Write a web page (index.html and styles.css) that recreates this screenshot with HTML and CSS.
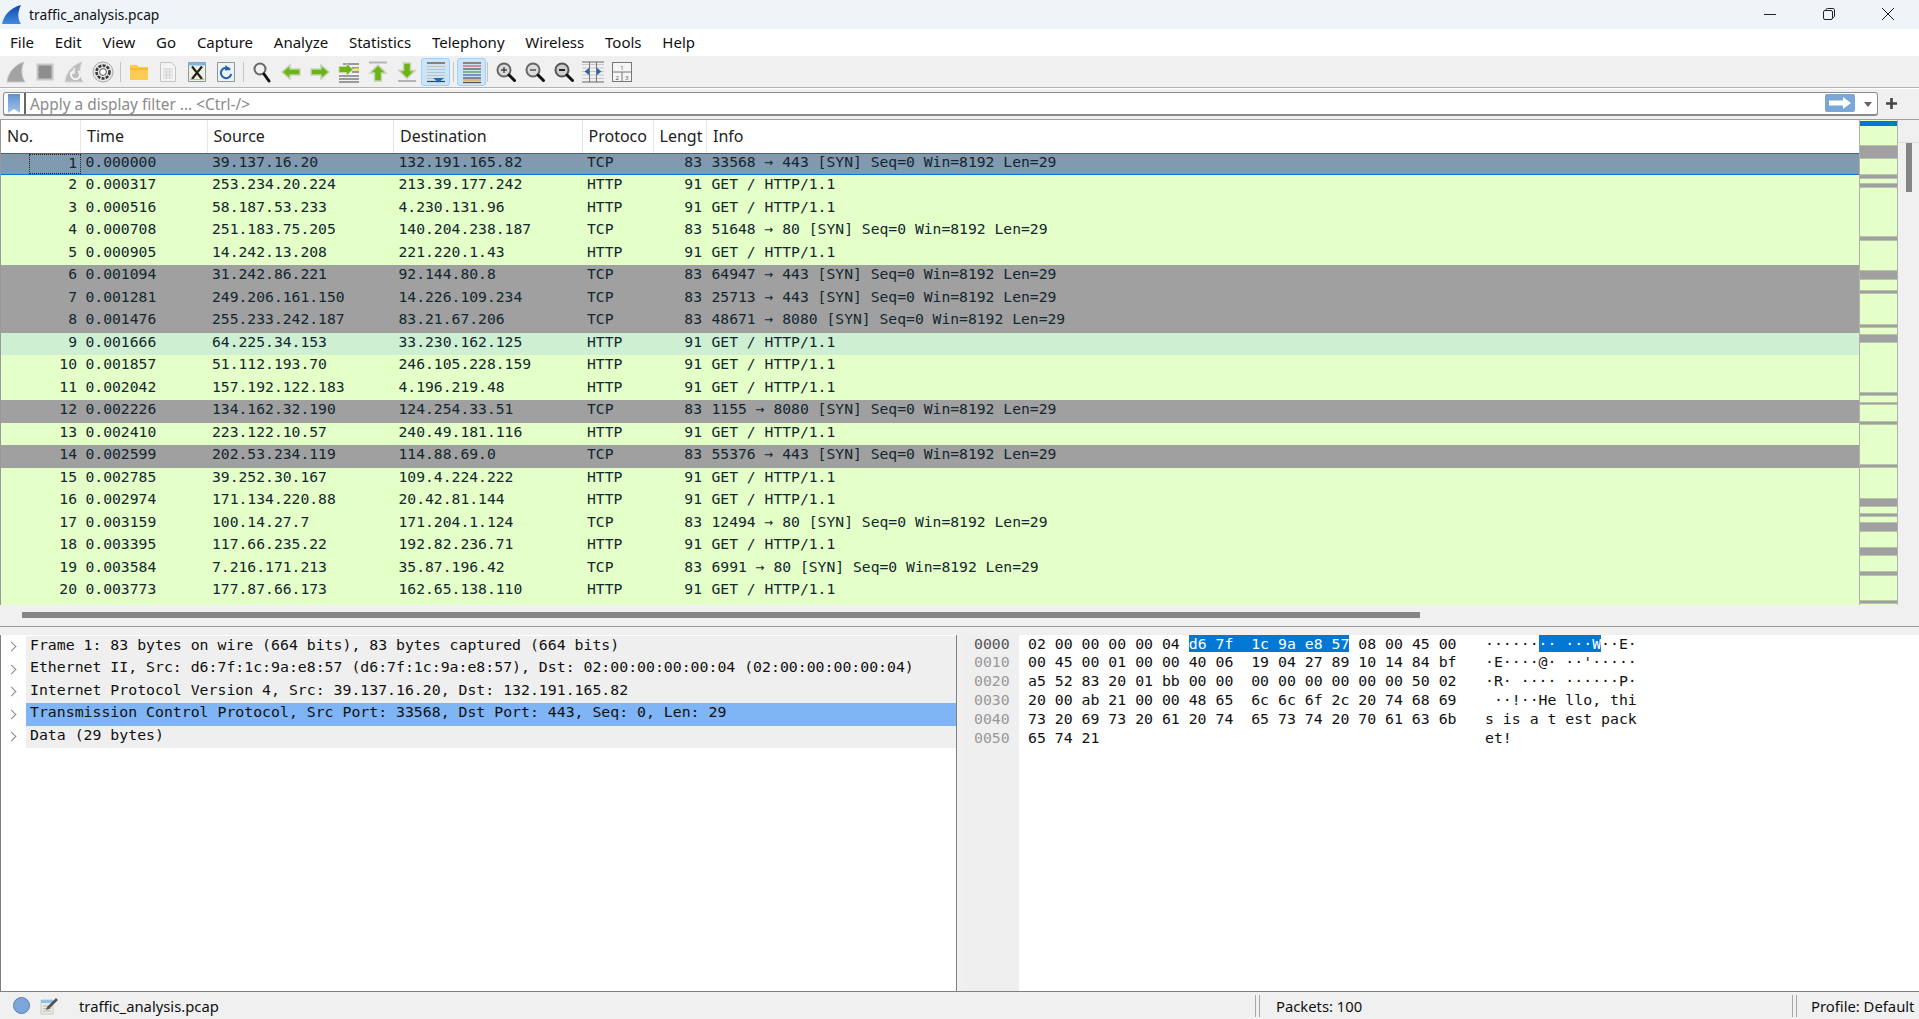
FILE: index.html
```html
<!DOCTYPE html>
<html lang="en">
<head>
    <meta charset="UTF-8">
    <title>traffic_analysis.pcap</title>
    <link rel="stylesheet" href="styles.css">
</head>
<body>
    <div class="titlebar">
        <svg class="app-icon" width="20" height="20" viewBox="0 0 20 20"><defs><linearGradient id="fin" x1="0" y1="0" x2="0" y2="1"><stop offset="0" stop-color="#0f4aa8"/><stop offset="1" stop-color="#3f8be0"/></linearGradient></defs><path d="M0 19C2 10 8 3 19 0C16 6 15 13 19 19Z" fill="url(#fin)"/></svg>
        <span class="title-text">traffic_analysis.pcap</span>
        <div class="win-buttons">
            <svg width="14" height="14" viewBox="0 0 14 14"><path d="M1 7.5H13" stroke="#222" fill="none"/></svg>
            <svg width="14" height="14" viewBox="0 0 14 14"><rect x="1.5" y="3.5" width="9" height="9" rx="1.5" fill="none" stroke="#222"/><path d="M4 3V2.5C4 1.7 4.7 1.5 5.5 1.5H11C12 1.5 12.5 2 12.5 3V9C12.5 10 12 10.5 11 10.5" fill="none" stroke="#222"/></svg>
            <svg width="14" height="14" viewBox="0 0 14 14"><path d="M1 1L13 13M13 1L1 13" stroke="#222" fill="none"/></svg>
        </div>
    </div>

    <div class="menubar">
        <span>File</span><span>Edit</span><span>View</span><span>Go</span><span>Capture</span><span>Analyze</span><span>Statistics</span><span>Telephony</span><span>Wireless</span><span>Tools</span><span>Help</span>
    </div>

    <div class="toolbar">
        <div class="tbtn"><svg width="24" height="24" viewBox="0 0 24 24"><path d="M3 22C4 13 10 5 20 2C17 8 17 16 21 22Z" fill="#a3a3a3" stroke="#c9c9c9"/></svg></div>
        <div class="tbtn"><svg width="24" height="24" viewBox="0 0 24 24"><rect x="4.5" y="4.5" width="15" height="15" fill="#8e8e8e" stroke="#c6c6c6" stroke-width="2"/></svg></div>
        <div class="tbtn"><svg width="24" height="24" viewBox="0 0 24 24"><path d="M3 22C4 13 10 5 20 2C17 8 17 16 21 22Z" fill="#bdbdbd" stroke="#d6d6d6"/><path d="M16 11A4.5 4.5 0 1 1 11 11" fill="none" stroke="#f4f4f4" stroke-width="2"/><path d="M12 8V13H8" fill="none" stroke="#f4f4f4" stroke-width="1.5"/></svg></div>
        <div class="tbtn"><svg width="24" height="24" viewBox="0 0 24 24"><circle cx="12" cy="12" r="10" fill="#e8e8e8" stroke="#a8a8a8"/><circle cx="12" cy="12" r="6.5" fill="none" stroke="#3a3a3a" stroke-width="2.6" stroke-dasharray="3 1.2"/><circle cx="12" cy="12" r="3.4" fill="#fff" stroke="#555"/></svg></div>
        <div class="tsep"></div>
        <div class="tbtn"><svg width="24" height="24" viewBox="0 0 24 24"><path d="M3 5H10L12 7H21V20H3Z" fill="#fccb52"/><path d="M3 9H21" stroke="#f5b52c" stroke-width="1.5"/></svg></div>
        <div class="tbtn"><svg width="24" height="24" viewBox="0 0 24 24"><path d="M4.5 2.5H15L19.5 6.5V21.5H4.5Z" fill="#f4f4f4" stroke="#c4c4c4"/><path d="M7 9H17M7 12H17M7 15H17M7 18H17M10.3 9V18M13.7 9V18" stroke="#d0d0d0"/></svg></div>
        <div class="tbtn"><svg width="24" height="24" viewBox="0 0 24 24"><path d="M3.5 2.5H20.5V21.5H3.5Z" fill="#eef0e0" stroke="#8a9a9a"/><path d="M3.5 2.5H20.5V5.5H3.5Z" fill="#7fb6e4"/><path d="M7 6.5L17 19M17 6.5L7 19" stroke="#222" stroke-width="2.2"/><path d="M5 19.5H19" stroke="#b8b8a0"/></svg></div>
        <div class="tbtn"><svg width="24" height="24" viewBox="0 0 24 24"><path d="M3.5 2.5H20.5V21.5H3.5Z" fill="#eef2f2" stroke="#8a9a9a"/><path d="M16 9.5A5.2 5.2 0 1 0 17.2 14" fill="none" stroke="#1f62b5" stroke-width="2"/><path d="M11.5 5L16.8 10L11 10.5Z" fill="#1f62b5"/></svg></div>
        <div class="tsep"></div>
        <div class="tbtn"><svg width="24" height="24" viewBox="0 0 24 24"><circle cx="10" cy="9" r="5.5" fill="#f2f2f2" stroke="#666" stroke-width="2"/><path d="M14 14L19 21" stroke="#111" stroke-width="3" stroke-linecap="round"/></svg></div>
        <div class="tbtn"><svg width="24" height="24" viewBox="0 0 24 24"><path d="M3 12L11 5V9H21V15H11V19Z" fill="#6cb414" stroke="#c4d4b4" stroke-width="1.5"/></svg></div>
        <div class="tbtn"><svg width="24" height="24" viewBox="0 0 24 24"><path d="M21 12L13 5V9H3V15H13V19Z" fill="#6cb414" stroke="#c4d4b4" stroke-width="1.5"/></svg></div>
        <div class="tbtn"><svg width="24" height="24" viewBox="0 0 24 24"><path d="M6 4H22M15 8H22M15 12H22M2 16H22M2 19H22M2 22H22" stroke="#444" stroke-width="1.2"/><path d="M17 9.5H22" stroke="#f3e24a" stroke-width="2.5"/><path d="M16 9.5L9.5 3.5V6.5H2V12.5H9.5V15.5Z" fill="#6cb414" stroke="#c4d4b4"/></svg></div>
        <div class="tbtn"><svg width="24" height="24" viewBox="0 0 24 24"><path d="M3 2.5H21" stroke="#b4b4b4" stroke-width="2"/><path d="M12 5L20 13H15.5V21H8.5V13H4Z" fill="#6cb414" stroke="#c4d4b4" stroke-width="1.5"/></svg></div>
        <div class="tbtn"><svg width="24" height="24" viewBox="0 0 24 24"><path d="M3 21H21" stroke="#b4b4b4" stroke-width="2"/><path d="M12 18.5L20 10.5H15.5V3H8.5V10.5H4Z" fill="#6cb414" stroke="#c4d4b4" stroke-width="1.5"/></svg></div>
        <div class="tbtn active"><svg width="24" height="24" viewBox="0 0 24 24"><path d="M3 3H21" stroke="#444" stroke-width="1.2"/><path d="M3 6.5H21M3 9.5H21M3 12.5H21M3 15.5H21M3 18.5H21" stroke="#c0c0c0"/><path d="M3 21.5H21" stroke="#444" stroke-width="1.2"/><path d="M9 18H20L14.5 22.5Z" fill="#2d62ad"/></svg></div>
        <div class="tsep"></div>
        <div class="tbtn active"><svg width="24" height="24" viewBox="0 0 24 24"><path d="M3 3H21" stroke="#555" stroke-width="1.3"/><path d="M3 6H21" stroke="#dc5a5a" stroke-width="1.3"/><path d="M3 9H21" stroke="#555" stroke-width="1.3"/><path d="M3 12H21" stroke="#5b9a3c" stroke-width="1.3"/><path d="M3 15H21" stroke="#4a62c8" stroke-width="1.3"/><path d="M3 18H21" stroke="#555" stroke-width="1.3"/><path d="M3 20H21" stroke="#d8a828" stroke-width="1.3"/><path d="M3 22.5H21" stroke="#555" stroke-width="1.3"/></svg></div>
        <div class="tsep tight"></div>
        <div class="tbtn"><svg width="24" height="24" viewBox="0 0 24 24"><circle cx="10" cy="10" r="6.5" fill="#dcdcdc" stroke="#666" stroke-width="2"/><path d="M15 15L20.5 20.5" stroke="#111" stroke-width="3" stroke-linecap="round"/><path d="M7 10H13M10 7V13" stroke="#444" stroke-width="1.4"/></svg></div>
        <div class="tbtn"><svg width="24" height="24" viewBox="0 0 24 24"><circle cx="10" cy="10" r="6.5" fill="#dcdcdc" stroke="#666" stroke-width="2"/><path d="M15 15L20.5 20.5" stroke="#111" stroke-width="3" stroke-linecap="round"/><path d="M7 10H13" stroke="#444" stroke-width="1.4"/></svg></div>
        <div class="tbtn"><svg width="24" height="24" viewBox="0 0 24 24"><circle cx="10" cy="10" r="6.5" fill="#cfcfcf" stroke="#555" stroke-width="2"/><path d="M15 15L20.5 20.5" stroke="#111" stroke-width="3" stroke-linecap="round"/><path d="M7 10H13" stroke="#222" stroke-width="2"/></svg></div>
        <div class="tbtn"><svg width="24" height="24" viewBox="0 0 24 24"><path d="M1 4.5H23M1 8H23M1 11.5H23M1 15H23M1 18.5H23" stroke="#c6c6c6"/><path d="M1 2H23M1 22H23" stroke="#666"/><path d="M8.5 2V22M15.5 2V22" stroke="#777"/><path d="M8 8V15L3.5 11.5Z M16 8V15L20.5 11.5Z" fill="#2d62ad"/></svg></div>
        <div class="tbtn"><svg width="24" height="24" viewBox="0 0 24 24"><rect x="2.5" y="2.5" width="19" height="19" fill="#f5f5f5" stroke="#777"/><path d="M2.5 12H21.5M12 12V21.5" stroke="#777"/><text x="12" y="10" class="pane-num">1</text><text x="7.2" y="19.5" class="pane-num">2</text><text x="16.8" y="19.5" class="pane-num">3</text></svg></div>
    </div>

    <div class="filterbar">
        <div class="filter-input">
            <div class="bookmark"><svg width="12" height="19" viewBox="0 0 12 19"><defs><linearGradient id="mark" x1="0" y1="0" x2="0" y2="1"><stop offset="0" stop-color="#5f92d0"/><stop offset="1" stop-color="#a2c3ea"/></linearGradient></defs><path d="M0 0H12V19L6 15L0 19Z" fill="url(#mark)"/></svg></div>
            <span class="placeholder">Apply a display filter ... &lt;Ctrl-/&gt;</span>
            <div class="apply-btn"><svg width="22" height="12" viewBox="0 0 22 12"><path d="M0 3.5H14V0L22 6L14 12V8.5H0Z" fill="#fff"/></svg></div>
            <div class="filter-drop"></div>
        </div>
        <svg class="filter-plus" width="11" height="11" viewBox="0 0 11 11"><path d="M5.5 0V11M0 5.5H11" stroke="#444" stroke-width="2.6"/></svg>
    </div>

    <div class="packets">
        <div class="list-wrap">
            <div class="list">
                <div class="cols list-head">
                    <div>No.</div><div>Time</div><div>Source</div><div>Destination</div><div>Protoco</div><div>Lengt</div><div>Info</div>
                </div>
                <div class="cols row selected"><div class="no focus">1</div><div>0.000000</div><div>39.137.16.20</div><div>132.191.165.82</div><div>TCP</div><div class="len">83</div><div>33568 → 443 [SYN] Seq=0 Win=8192 Len=29</div></div>
                <div class="cols row"><div class="no">2</div><div>0.000317</div><div>253.234.20.224</div><div>213.39.177.242</div><div>HTTP</div><div class="len">91</div><div>GET / HTTP/1.1</div></div>
                <div class="cols row"><div class="no">3</div><div>0.000516</div><div>58.187.53.233</div><div>4.230.131.96</div><div>HTTP</div><div class="len">91</div><div>GET / HTTP/1.1</div></div>
                <div class="cols row"><div class="no">4</div><div>0.000708</div><div>251.183.75.205</div><div>140.204.238.187</div><div>TCP</div><div class="len">83</div><div>51648 → 80 [SYN] Seq=0 Win=8192 Len=29</div></div>
                <div class="cols row"><div class="no">5</div><div>0.000905</div><div>14.242.13.208</div><div>221.220.1.43</div><div>HTTP</div><div class="len">91</div><div>GET / HTTP/1.1</div></div>
                <div class="cols row grey"><div class="no">6</div><div>0.001094</div><div>31.242.86.221</div><div>92.144.80.8</div><div>TCP</div><div class="len">83</div><div>64947 → 443 [SYN] Seq=0 Win=8192 Len=29</div></div>
                <div class="cols row grey"><div class="no">7</div><div>0.001281</div><div>249.206.161.150</div><div>14.226.109.234</div><div>TCP</div><div class="len">83</div><div>25713 → 443 [SYN] Seq=0 Win=8192 Len=29</div></div>
                <div class="cols row grey"><div class="no">8</div><div>0.001476</div><div>255.233.242.187</div><div>83.21.67.206</div><div>TCP</div><div class="len">83</div><div>48671 → 8080 [SYN] Seq=0 Win=8192 Len=29</div></div>
                <div class="cols row teal"><div class="no">9</div><div>0.001666</div><div>64.225.34.153</div><div>33.230.162.125</div><div>HTTP</div><div class="len">91</div><div>GET / HTTP/1.1</div></div>
                <div class="cols row"><div class="no">10</div><div>0.001857</div><div>51.112.193.70</div><div>246.105.228.159</div><div>HTTP</div><div class="len">91</div><div>GET / HTTP/1.1</div></div>
                <div class="cols row"><div class="no">11</div><div>0.002042</div><div>157.192.122.183</div><div>4.196.219.48</div><div>HTTP</div><div class="len">91</div><div>GET / HTTP/1.1</div></div>
                <div class="cols row grey"><div class="no">12</div><div>0.002226</div><div>134.162.32.190</div><div>124.254.33.51</div><div>TCP</div><div class="len">83</div><div>1155 → 8080 [SYN] Seq=0 Win=8192 Len=29</div></div>
                <div class="cols row"><div class="no">13</div><div>0.002410</div><div>223.122.10.57</div><div>240.49.181.116</div><div>HTTP</div><div class="len">91</div><div>GET / HTTP/1.1</div></div>
                <div class="cols row grey"><div class="no">14</div><div>0.002599</div><div>202.53.234.119</div><div>114.88.69.0</div><div>TCP</div><div class="len">83</div><div>55376 → 443 [SYN] Seq=0 Win=8192 Len=29</div></div>
                <div class="cols row"><div class="no">15</div><div>0.002785</div><div>39.252.30.167</div><div>109.4.224.222</div><div>HTTP</div><div class="len">91</div><div>GET / HTTP/1.1</div></div>
                <div class="cols row"><div class="no">16</div><div>0.002974</div><div>171.134.220.88</div><div>20.42.81.144</div><div>HTTP</div><div class="len">91</div><div>GET / HTTP/1.1</div></div>
                <div class="cols row"><div class="no">17</div><div>0.003159</div><div>100.14.27.7</div><div>171.204.1.124</div><div>TCP</div><div class="len">83</div><div>12494 → 80 [SYN] Seq=0 Win=8192 Len=29</div></div>
                <div class="cols row"><div class="no">18</div><div>0.003395</div><div>117.66.235.22</div><div>192.82.236.71</div><div>HTTP</div><div class="len">91</div><div>GET / HTTP/1.1</div></div>
                <div class="cols row"><div class="no">19</div><div>0.003584</div><div>7.216.171.213</div><div>35.87.196.42</div><div>TCP</div><div class="len">83</div><div>6991 → 80 [SYN] Seq=0 Win=8192 Len=29</div></div>
                <div class="cols row last"><div class="no">20</div><div>0.003773</div><div>177.87.66.173</div><div>162.65.138.110</div><div>HTTP</div><div class="len">91</div><div>GET / HTTP/1.1</div></div>
            </div>
            <div class="minimap">
                <i class="mark now" style="top:1px;height:5px"></i>
                <i class="mark" style="top:25px;height:14px"></i>
                <i class="mark" style="top:54px;height:5px"></i>
                <i class="mark" style="top:63px;height:5px"></i>
                <i class="mark" style="top:116px;height:5px"></i>
                <i class="mark" style="top:150px;height:10px"></i>
                <i class="mark" style="top:170px;height:4px"></i>
                <i class="mark" style="top:204px;height:4px"></i>
                <i class="mark" style="top:214px;height:9px"></i>
                <i class="mark" style="top:272px;height:4px"></i>
                <i class="mark" style="top:282px;height:3px"></i>
                <i class="mark" style="top:301px;height:4px"></i>
                <i class="mark" style="top:344px;height:4px"></i>
                <i class="mark" style="top:378px;height:9px"></i>
                <i class="mark" style="top:393px;height:4px"></i>
                <i class="mark" style="top:402px;height:10px"></i>
                <i class="mark" style="top:427px;height:9px"></i>
                <i class="mark" style="top:451px;height:5px"></i>
                <i class="mark" style="top:480px;height:4px"></i>
            </div>
            <div class="vscroll"><div class="vscroll-head"></div><div class="vscroll-thumb"></div></div>
        </div>
        <div class="hscroll"><div class="hscroll-thumb"></div></div>
    </div>

    <div class="panes">
        <div class="details">
            <div class="tree-row"><span class="chev"></span><span class="tree-text">Frame 1: 83 bytes on wire (664 bits), 83 bytes captured (664 bits)</span></div>
            <div class="tree-row"><span class="chev"></span><span class="tree-text">Ethernet II, Src: d6:7f:1c:9a:e8:57 (d6:7f:1c:9a:e8:57), Dst: 02:00:00:00:00:04 (02:00:00:00:00:04)</span></div>
            <div class="tree-row"><span class="chev"></span><span class="tree-text">Internet Protocol Version 4, Src: 39.137.16.20, Dst: 132.191.165.82</span></div>
            <div class="tree-row picked"><span class="chev"></span><span class="tree-text">Transmission Control Protocol, Src Port: 33568, Dst Port: 443, Seq: 0, Len: 29</span></div>
            <div class="tree-row"><span class="chev"></span><span class="tree-text">Data (29 bytes)</span></div>
        </div>
        <div class="bytes">
            <div class="offsets">
                <div class="current">0000</div>
                <div>0010</div>
                <div>0020</div>
                <div>0030</div>
                <div>0040</div>
                <div>0050</div>
            </div>
            <div class="hex">
                <div>02 00 00 00 00 04 <b>d6 7f  1c 9a e8 57</b> 08 00 45 00</div>
                <div>00 45 00 01 00 00 40 06  19 04 27 89 10 14 84 bf</div>
                <div>a5 52 83 20 01 bb 00 00  00 00 00 00 00 00 50 02</div>
                <div>20 00 ab 21 00 00 48 65  6c 6c 6f 2c 20 74 68 69</div>
                <div>73 20 69 73 20 61 20 74  65 73 74 20 70 61 63 6b</div>
                <div>65 74 21</div>
            </div>
            <div class="ascii">
                <div>······<b>·· ···W</b>··E·</div>
                <div>·E····@· ··'·····</div>
                <div>·R· ···· ······P·</div>
                <div> ··!··He llo, thi</div>
                <div>s is a t est pack</div>
                <div>et!</div>
            </div>
        </div>
    </div>

    <div class="statusbar">
        <span class="status-dot"></span>
        <svg class="status-edit" width="20" height="20" viewBox="0 0 20 20"><path d="M2 4H14V18H2Z" fill="#e8ece4" stroke="#c8ccc4"/><path d="M2 4H14V7H2Z" fill="#8fc0ec"/><path d="M4 10H12M4 12.5H12M4 15H12" stroke="#b8b8b8"/><path d="M8 11L17 2L19 4L10 13L7 14Z" fill="#555"/></svg>
        <span class="status-file">traffic_analysis.pcap</span>
        <span class="status-sep"></span>
        <span class="status-packets">Packets: 100</span>
        <span class="status-sep"></span>
        <span class="status-profile">Profile: Default</span>
    </div>
</body>
</html>
```

FILE: styles.css
```css
html, body {
    margin: 0;
    height: 100%;
}
body {
    width: 1919px;
    height: 1019px;
    overflow: hidden;
    display: flex;
    flex-direction: column;
    font-family: "Noto Sans", sans-serif;
    font-size: 15px;
    color: #111;
    background: #f0f0f0;
}

/* title + menu */
.titlebar {
    height: 29px;
    background: #eff4f9;
    display: flex;
    align-items: center;
    padding-left: 2px;
}
.app-icon {
    margin-top: 1px;
}
.title-text {
    margin-left: 7px;
    font-size: 13.8px;
}
.win-buttons {
    margin-left: auto;
    display: flex;
    gap: 45px;
    padding-right: 24px;
}
.menubar {
    height: 27px;
    background: #fff;
    display: flex;
    align-items: center;
    padding-left: 10px;
    gap: 20.8px;
}

/* toolbar */
.toolbar {
    height: 29px;
    padding: 2px 0 0 1px;
    display: flex;
    align-items: center;
    border-bottom: 1px solid #b4b4b4;
}
.tbtn {
    width: 29px;
    height: 28px;
    display: flex;
    align-items: center;
    justify-content: center;
    box-sizing: border-box;
}
.tbtn.active {
    background: #cce4f7;
    border: 1px solid #99d1ff;
    border-radius: 3px;
}
.tsep {
    width: 1px;
    height: 20px;
    margin: 0 3px;
    background: #c4c4c4;
}
.tsep.tight {
    margin-left: 1px;
}
.pane-num {
    font-size: 6px;
    text-anchor: middle;
    fill: #555;
}

/* display filter */
.filterbar {
    height: 32px;
    display: flex;
    align-items: center;
    padding: 0 0 0 3px;
    border-top: 1px solid #fff;
    border-bottom: 1px solid #a0a0a0;
    box-sizing: border-box;
}
.filter-input {
    width: 1875px;
    height: 24px;
    background: #fff;
    border: 1px solid #8c8c8c;
    border-bottom-width: 2px;
    border-radius: 3px;
    box-sizing: border-box;
    display: flex;
    align-items: center;
}
.bookmark {
    width: 20px;
    height: 100%;
    display: flex;
    align-items: center;
    justify-content: center;
    border-right: 2px solid #666;
}
.placeholder {
    margin: 3px 0 0 4px;
    font-size: 15.4px;
    line-height: 20px;
    color: #8a8a8a;
}
.apply-btn {
    margin-left: auto;
    width: 30px;
    height: 18px;
    background: #7ba6d8;
    border-radius: 2px;
    display: flex;
    align-items: center;
    justify-content: center;
}
.filter-drop {
    width: 0;
    height: 0;
    margin: 2px 5px 0 9px;
    border: 4px solid transparent;
    border-top: 5px solid #666;
    border-bottom: 0;
}
.filter-plus {
    margin-left: 8px;
}

/* packet list */
.packets {
    height: 507px;
    border-bottom: 1px solid #999;
    box-sizing: border-box;
}
.list-wrap {
    height: 485px;
    display: flex;
}
.list {
    width: 1859px;
    background: #e4ffc7;
    font-family: "DejaVu Sans Mono", monospace;
    font-size: 14.7px;
    border-left: 1px solid #999;
    box-sizing: border-box;
    overflow: hidden;
}
.cols {
    display: grid;
    grid-template-columns: 80px 126.5px 186.5px 188.5px 71px 53.5px 1fr;
}
.list-head {
    height: 33px;
    background: #fff;
    font-family: "Noto Sans", sans-serif;
    font-size: 16px;
    color: #222;
    line-height: 33px;
}
.list-head div {
    padding-left: 6px;
    border-right: 1px solid #e6e6e6;
    white-space: nowrap;
    overflow: hidden;
}
.list-head div:last-child {
    border-right: 0;
}
.row {
    height: 22.5px;
    line-height: 18px;
    color: #12272f;
    white-space: pre;
}
.row > div {
    padding-left: 4.5px;
}
.row > .no,
.row > .len {
    padding-left: 0;
    padding-right: 4px;
    text-align: right;
}
.row > .len {
    padding-right: 5px;
}
.row.grey {
    background: #a0a0a0;
}
.row.teal {
    background: #ceefd2;
}
.row.last {
    height: 25px;
}
.row.selected {
    background: #7f9ab1;
    border-top: 1px solid #0078d4;
    border-bottom: 1px solid #0078d4;
    box-sizing: border-box;
    line-height: 16px;
}
.row .focus {
    margin-left: 28px;
    border: 1px dotted #222;
    padding-right: 3px;
}
.minimap {
    width: 39px;
    position: relative;
    background: #e4ffc7;
    border-left: 1px solid #b0b0b0;
    border-right: 1px solid #b0b0b0;
    box-sizing: border-box;
}
.mark {
    position: absolute;
    left: 0;
    right: 0;
    background: #a0a0a0;
    border: solid #b7c3a8;
    border-width: 1px 0;
    box-sizing: border-box;
}
.mark.now {
    background: #0078d4;
    border: 0;
}
.vscroll {
    width: 21px;
    display: flex;
    flex-direction: column;
    align-items: center;
}
.vscroll-head {
    width: 100%;
    height: 22px;
    border-bottom: 1px solid #dcdcdc;
}
.vscroll-thumb {
    width: 6px;
    height: 49px;
    background: #858585;
}
.hscroll {
    height: 21px;
    display: flex;
    align-items: center;
    padding-left: 22px;
}
.hscroll-thumb {
    width: 1398px;
    height: 6px;
    background: #858585;
}

/* lower panes */
.panes {
    height: 359px;
    margin-top: 8px;
    display: flex;
    gap: 8px;
    border-bottom: 1px solid #808080;
    box-sizing: border-box;
}
.details {
    width: 957px;
    background: #fff;
    border-left: 1px solid #808080;
    border-right: 1px solid #808080;
    box-sizing: border-box;
    font-family: "DejaVu Sans Mono", monospace;
    font-size: 14.83px;
    padding-top: 1px;
}
.tree-row {
    height: 22.5px;
    line-height: 18px;
    display: flex;
    align-items: center;
}
.chev {
    width: 7px;
    height: 7px;
    margin: 0 11px 0 7px;
    border-top: 1px solid #888;
    border-right: 1px solid #888;
    box-sizing: border-box;
    transform: rotate(45deg);
    flex: none;
}
.tree-text {
    flex: 1;
    background: #efefef;
    padding-left: 4px;
    height: 100%;
    white-space: pre;
}
.tree-row.picked .tree-text {
    background: #7fb4f5;
}
.bytes {
    flex: 1;
    display: flex;
    background: #fff;
    font-family: "DejaVu Sans Mono", monospace;
    font-size: 14.83px;
    line-height: 18.9px;
}
.bytes div div {
    white-space: pre;
}
.offsets {
    width: 54px;
    background: #efefef;
    padding-left: 9px;
    box-sizing: border-box;
    color: #999;
}
.offsets .current {
    color: #555;
}
.hex {
    margin-left: 9px;
    width: 457px;
}
.hex b,
.ascii b {
    font-weight: normal;
    background: #0078d4;
    color: #fff;
}

/* status bar */
.statusbar {
    height: 27px;
    display: flex;
    align-items: center;
    padding-left: 13px;
    font-size: 14.8px;
}
.status-dot {
    width: 17px;
    height: 17px;
    border-radius: 50%;
    background: #7ba6dc;
    border: 1px solid #5f7fa8;
    box-sizing: border-box;
}
.status-edit {
    margin-left: 9px;
}
.status-file {
    margin-left: 20px;
    width: 1176px;
}
.status-sep {
    width: 3px;
    height: 22px;
    border-left: 1px solid #a8a8a8;
    border-right: 1px solid #a8a8a8;
}
.status-packets {
    margin-left: 16px;
    width: 516px;
}
.status-profile {
    margin-left: 14px;
    white-space: nowrap;
}
```
